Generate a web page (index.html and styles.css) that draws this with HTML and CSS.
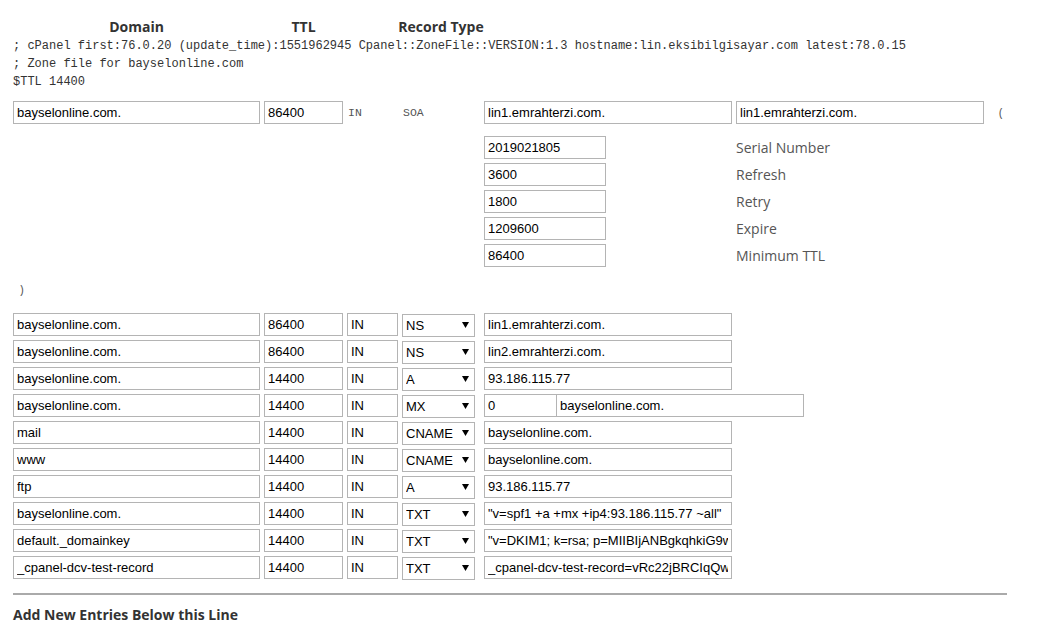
FILE: index.html
```html
<!DOCTYPE html>
<html lang="en">
<head>
  <meta charset="UTF-8">
  <title>Zone File Editor</title>
  <link rel="stylesheet" href="styles.css">
</head>
<body>
  <div class="zone-editor">
    <div class="col-heads">
      <div class="head head-name">Domain</div>
      <div class="head head-ttl">TTL</div>
      <div class="head head-type">Record Type</div>
    </div>

    <!-- comments at the top of the zone file -->
    <pre class="zone-comments">; cPanel first:76.0.20 (update_time):1551962945 Cpanel::ZoneFile::VERSION:1.3 hostname:lin.eksibilgisayar.com latest:78.0.15
; Zone file for bayselonline.com
$TTL 14400</pre>

    <!-- SOA record -->
    <div class="rec-row">
      <input class="fld fld-name" type="text" value="bayselonline.com.">
      <input class="fld fld-ttl" type="text" value="86400">
      <span class="fixed fixed-class">IN</span>
      <span class="fixed fixed-type">SOA</span>
      <input class="fld fld-data" type="text" value="lin1.emrahterzi.com.">
      <input class="fld fld-data" type="text" value="lin1.emrahterzi.com.">
      <span class="paren">(</span>
    </div>

    <div class="soa-values">
      <div class="soa-row">
        <input class="fld fld-soa" type="text" value="2019021805">
        <span class="soa-label">Serial Number</span>
      </div>
      <div class="soa-row">
        <input class="fld fld-soa" type="text" value="3600">
        <span class="soa-label">Refresh</span>
      </div>
      <div class="soa-row">
        <input class="fld fld-soa" type="text" value="1800">
        <span class="soa-label">Retry</span>
      </div>
      <div class="soa-row">
        <input class="fld fld-soa" type="text" value="1209600">
        <span class="soa-label">Expire</span>
      </div>
      <div class="soa-row">
        <input class="fld fld-soa" type="text" value="86400">
        <span class="soa-label">Minimum TTL</span>
      </div>
    </div>

    <div class="paren-close">)</div>

    <!-- regular records -->
    <div class="records" id="records"></div>

    <hr class="divider">
    <h3 class="new-entries">Add New Entries Below this Line</h3>
  </div>

  <script>
    const records = [
      ['bayselonline.com.', '86400', 'NS', ['lin1.emrahterzi.com.']],
      ['bayselonline.com.', '86400', 'NS', ['lin2.emrahterzi.com.']],
      ['bayselonline.com.', '14400', 'A', ['93.186.115.77']],
      ['bayselonline.com.', '14400', 'MX', ['0', 'bayselonline.com.']],
      ['mail', '14400', 'CNAME', ['bayselonline.com.']],
      ['www', '14400', 'CNAME', ['bayselonline.com.']],
      ['ftp', '14400', 'A', ['93.186.115.77']],
      ['bayselonline.com.', '14400', 'TXT', ['"v=spf1 +a +mx +ip4:93.186.115.77 ~all"']],
      ['default._domainkey', '14400', 'TXT', ['"v=DKIM1; k=rsa; p=MIIBIjANBgkqhkiG9w0BAQEFAAOCAQ8AMIIBCgKCAQEA"']],
      ['_cpanel-dcv-test-record', '14400', 'TXT', ['_cpanel-dcv-test-record=vRc22jBRCIqQwk9X']]
    ];
    const types = ['A', 'AAAA', 'CNAME', 'MX', 'NS', 'TXT', 'SRV'];
    const list = document.getElementById('records');

    function makeInput(cls, value) {
      const el = document.createElement('input');
      el.type = 'text';
      el.className = 'fld ' + cls;
      el.value = value;
      return el;
    }

    records.forEach(function (rec) {
      const row = document.createElement('div');
      row.className = 'rec-row';
      row.appendChild(makeInput('fld-name', rec[0]));
      row.appendChild(makeInput('fld-ttl', rec[1]));
      row.appendChild(makeInput('fld-class', 'IN'));

      const wrap = document.createElement('div');
      wrap.className = 'type-select';
      const sel = document.createElement('select');
      types.forEach(function (t) {
        const opt = document.createElement('option');
        opt.textContent = t;
        if (t === rec[2]) opt.selected = true;
        sel.appendChild(opt);
      });
      wrap.appendChild(sel);
      wrap.insertAdjacentHTML('beforeend',
        '<svg class="caret" width="7" height="6" viewBox="0 0 7 6"><path d="M0 0h7L3.5 6z" fill="#000"/></svg>');
      row.appendChild(wrap);

      if (rec[3].length === 2) {
        // MX: priority box and target share a border
        const mx = document.createElement('div');
        mx.className = 'mx-pair';
        mx.appendChild(makeInput('fld-prio', rec[3][0]));
        mx.appendChild(makeInput('fld-data', rec[3][1]));
        row.appendChild(mx);
      } else {
        row.appendChild(makeInput('fld-data', rec[3][0]));
      }
      list.appendChild(row);
    });
  </script>
</body>
</html>
```

FILE: styles.css
```css
* {
  box-sizing: border-box;
}

body {
  margin: 0;
  background-color: #fff;
  font-family: "Open Sans", Arial, sans-serif;
  color: #333;
}

.zone-editor {
  padding: 17px 0 0 13px;
}

.col-heads {
  display: flex;
  height: 20px;
  line-height: 20px;
  font-size: 14px;
  font-weight: bold;
  color: #333;
}

.head {
  text-align: center;
}

.head-name {
  width: 247px;
}

.head-ttl {
  width: 79px;
  margin-left: 4px;
}

.head-type {
  width: 188px;
  margin-left: 4px;
}

.zone-comments {
  margin: 0;
  font-family: "Liberation Mono", "Courier New", monospace;
  font-size: 12px;
  line-height: 18px;
  color: #333;
  white-space: pre;
}

.rec-row {
  display: flex;
  align-items: center;
  height: 23px;
  margin-top: 10px;
}

.records .rec-row {
  margin-top: 0;
  margin-bottom: 4px;
}

.fld {
  height: 23px;
  margin: 0;
  padding: 0 3px;
  border: 1px solid #b4b4b4;
  border-radius: 0;
  font-family: "Liberation Sans", Arial, sans-serif;
  font-size: 13px;
  color: #000;
  background-color: #fff;
  outline: none;
}

.fld-name {
  width: 247px;
}

.fld-ttl {
  width: 79px;
  margin-left: 4px;
}

.fld-class {
  width: 51px;
  margin-left: 4px;
}

.fld-data {
  width: 248px;
  margin-left: 4px;
}

.fixed {
  font-family: "Liberation Mono", "Courier New", monospace;
  font-size: 11.5px;
  color: #555;
}

.fixed-class {
  width: 56px;
  padding-left: 5px;
}

.fixed-type {
  width: 85px;
  padding-left: 4px;
}

.rec-row .fixed-type + .fld-data {
  margin-left: 0;
}

.paren {
  margin-left: 15px;
  font-size: 12px;
  color: #555;
}

.soa-values {
  margin: 12px 0 0 471px;
}

.soa-row {
  display: flex;
  align-items: center;
  height: 23px;
  margin-bottom: 4px;
}

.fld-soa {
  width: 122px;
}

.soa-label {
  margin-left: 130px;
  font-size: 14px;
  color: #555;
}

.paren-close {
  margin: 14px 0 0 7px;
  height: 18px;
  line-height: 18px;
  font-size: 12px;
  color: #555;
}

.records {
  margin-top: 14px;
}

.type-select {
  position: relative;
  width: 73px;
  height: 23px;
  margin-left: 4px;
  margin-right: 5px;
}

.type-select select {
  width: 100%;
  height: 23px;
  margin: 0;
  padding: 0 3px;
  border: 1px solid #b4b4b4;
  border-radius: 0;
  background-color: #fff;
  font-family: "Liberation Sans", Arial, sans-serif;
  font-size: 13px;
  color: #000;
  appearance: none;
  -webkit-appearance: none;
}

.type-select .caret {
  position: absolute;
  top: 9px;
  right: 6px;
  pointer-events: none;
}

.mx-pair {
  display: flex;
  margin-left: 4px;
}

.mx-pair .fld-data {
  margin-left: -1px;
}

.fld-prio {
  width: 73px;
}

.divider {
  width: 994px;
  margin: 14px 0 0;
  border: 0;
  border-top: 2px solid #aaa;
}

.new-entries {
  margin: 10px 0 0;
  font-size: 14px;
  line-height: 20px;
  font-weight: bold;
  color: #333;
}
```
